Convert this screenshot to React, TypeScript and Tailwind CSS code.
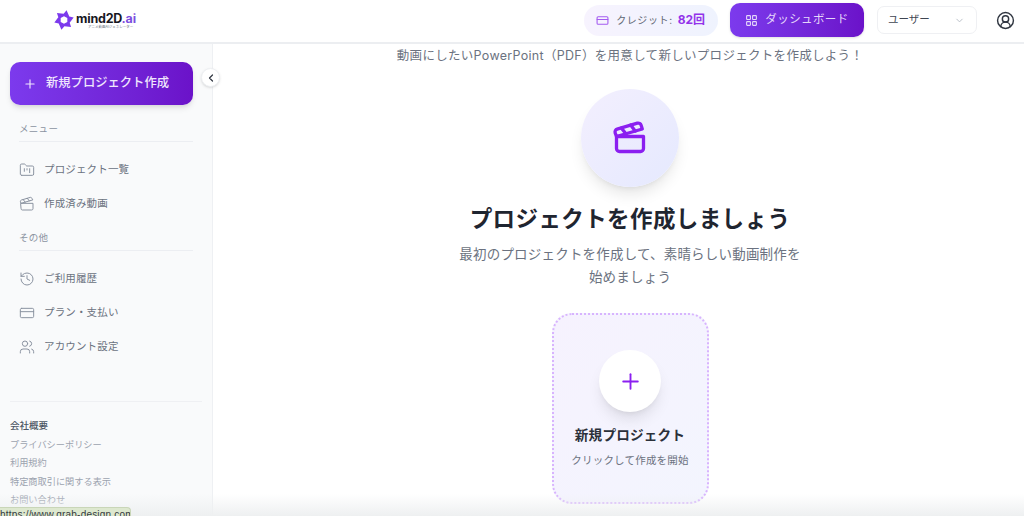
import { ChevronDown, ChevronLeft, CircleUserRound, Clapperboard, CreditCard, FolderKanban, History, LayoutGrid, Plus, Users } from "lucide-react";

// pinwheel outline of the logo mark
const logoPoints = [0, 1, 2, 3, 4, 5]
  .flatMap((i) => {
    const a = (i * Math.PI) / 3 - Math.PI / 2.4;
    const b = a + 0.72;
    return [
      `${(12 + 12 * Math.cos(a)).toFixed(2)} ${(12 + 12 * Math.sin(a)).toFixed(2)}`,
      `${(12 + 7.6 * Math.cos(b)).toFixed(2)} ${(12 + 7.6 * Math.sin(b)).toFixed(2)}`,
    ];
  })
  .join(" L ");

const logoHole = [0, 1, 2, 3, 4, 5]
  .map((i) => {
    const a = (i * Math.PI) / 3 - Math.PI / 6;
    return `${(12 + 4.6 * Math.cos(a)).toFixed(2)} ${(12 + 4.6 * Math.sin(a)).toFixed(2)}`;
  })
  .join(" L ");

function Logo() {
  return (
    <div className="flex items-center gap-[2px]">
      <svg width="20" height="20" viewBox="0 0 24 24" className="shrink-0">
        <path d={`M ${logoPoints} Z M ${logoHole} Z`} fill="#7c3aed" fillRule="evenodd" />
      </svg>
      <div className="flex flex-col items-start">
        <div className="text-[12.5px] font-bold leading-[13px] tracking-[-0.2px] text-[#17171f]">
          mind2D<span className="text-[#7c4fe0]">.ai</span>
        </div>
        <div className="ml-3 text-[3.5px] leading-[4px] text-gray-500">アニメ動画AIジェネレーター</div>
      </div>
    </div>
  );
}

function NavItem({ icon, label }: { icon: React.ReactNode; label: string }) {
  return (
    <div className="flex h-[34px] items-center gap-[9px] pl-[19px] text-[10.5px] tracking-[0.15px] text-[#6b7280]">
      <span className="flex w-[16px] justify-center text-[#8b93a1]">{icon}</span>
      {label}
    </div>
  );
}

function SectionTitle({ label }: { label: string }) {
  return (
    <div className="mx-[19px] border-b border-[#eceef2] pb-[5px] text-[9.5px] leading-[14px] tracking-[0.3px] text-[#8b93a1]">
      {label}
    </div>
  );
}

export default function App() {
  return (
    <div
      className="relative flex h-[516px] w-[1024px] flex-col overflow-hidden bg-white"
      style={{ fontFamily: 'Inter, "Noto Sans CJK JP", sans-serif' }}
    >
      {/* Header */}
      <header className="flex h-[44px] shrink-0 items-center border-b-2 border-[#eceef1] bg-white pb-[2px] pl-[54px] pr-[9px]">
        <Logo />
        <div className="ml-auto flex items-center">
          <div className="flex h-[31px] items-center gap-[7px] rounded-full bg-gradient-to-r from-[#f7f3fe] to-[#eff3fe] pl-[12px] pr-[13px]">
            <CreditCard size={13} strokeWidth={2} className="text-[#a45cf0]" />
            <span className="text-[10px] tracking-[0.6px] text-[#5f6672]">クレジット:</span>
            <span className="-ml-[2px] text-[12px] font-bold text-[#9333ea]">82回</span>
          </div>
          <button className="ml-[12px] flex h-[34px] w-[134px] items-center justify-center gap-[7px] rounded-[10px] bg-gradient-to-r from-[#7c3aed] to-[#6b12c9] text-[11.5px] tracking-[0.4px] text-[#e4d6fa] shadow-sm">
            <LayoutGrid size={13} strokeWidth={2} />
            ダッシュボード
          </button>
          <div className="ml-[13px] flex h-[28px] w-[100px] items-center justify-between rounded-[7px] border border-[#eff0f3] pl-[10px] pr-[11px] text-[10.5px] text-[#3f4652]">
            ユーザー
            <ChevronDown size={11} className="text-[#b6bbc4]" />
          </div>
          <CircleUserRound size={19} strokeWidth={1.8} className="ml-[19px] text-[#2f3540]" />
        </div>
      </header>

      <div className="flex min-h-0 flex-1">
        {/* Sidebar */}
        <aside className="flex w-[213px] shrink-0 flex-col border-r border-[#eef0f3] bg-[#f9fafb]">
          <div className="px-[10px] pt-[18px]">
            <button className="flex h-[43px] w-[183px] items-center gap-[9px] rounded-[10px] bg-gradient-to-r from-[#7c3aed] to-[#6b12c9] pl-[13px] text-[12.3px] font-medium text-[#efe6fd] shadow-md">
              <Plus size={14} strokeWidth={2} />
              新規プロジェクト作成
            </button>
          </div>
          <div className="mt-[17px]">
            <SectionTitle label="メニュー" />
          </div>
          <div className="mt-[11px]">
            <NavItem icon={<FolderKanban size={16} strokeWidth={1.5} />} label="プロジェクト一覧" />
            <NavItem icon={<Clapperboard size={16} strokeWidth={1.5} />} label="作成済み動画" />
          </div>
          <div className="mt-[10px]">
            <SectionTitle label="その他" />
          </div>
          <div className="mt-[11px]">
            <NavItem icon={<History size={16} strokeWidth={1.5} />} label="ご利用履歴" />
            <NavItem icon={<CreditCard size={16} strokeWidth={1.5} />} label="プラン・支払い" />
            <NavItem icon={<Users size={16} strokeWidth={1.5} />} label="アカウント設定" />
          </div>
          <div className="mx-[10px] mt-[37px] border-t border-[#eff0f3] pt-[15px]">
            <div className="text-[9.5px] font-medium leading-[18.5px] text-[#4b5563]">会社概要</div>
            <div className="text-[9.2px] leading-[18.5px] text-[#9ca3af]">プライバシーポリシー</div>
            <div className="text-[9.2px] leading-[18.5px] text-[#9ca3af]">利用規約</div>
            <div className="text-[9.2px] leading-[18.5px] text-[#9ca3af]">特定商取引に関する表示</div>
            <div className="text-[9.2px] leading-[18.5px] text-[#9ca3af]">お問い合わせ</div>
          </div>
        </aside>

        {/* Main */}
        <main className="flex min-w-0 flex-1 flex-col items-center pl-[23px]">
          <p className="mt-[2px] text-[12.5px] leading-[19px] tracking-[0.3px] text-[#6b7280]">
            動画にしたいPowerPoint（PDF）を用意して新しいプロジェクトを作成しよう！
          </p>
          <div className="mt-[24px] flex h-[98px] w-[98px] items-center justify-center rounded-full bg-gradient-to-br from-[#f3effe] to-[#e5e9fe] shadow-lg">
            <Clapperboard size={36} strokeWidth={2.2} className="text-[#8b1ff0]" />
          </div>
          <h1 className="mt-[15px] text-[22.5px] font-bold leading-[34px] tracking-[0.4px] text-[#1f2530]">
            プロジェクトを作成しましょう
          </h1>
          <p className="mt-[7px] w-[350px] text-center text-[13.5px] leading-[23px] tracking-[0.2px] text-[#6b7280]">
            最初のプロジェクトを作成して、素晴らしい動画制作を始めましょう
          </p>
          <div className="mt-[24px] flex h-[191px] w-[157px] shrink-0 flex-col items-center rounded-[20px] border-2 border-dotted border-[#d8b4fe] bg-gradient-to-br from-[#f6f2fe] to-[#f3f5fe]">
            <div className="mt-[35px] flex h-[62px] w-[62px] items-center justify-center rounded-full bg-white shadow-lg">
              <Plus size={25} strokeWidth={1.8} className="text-[#8b1ff0]" />
            </div>
            <div className="mt-[13px] text-[13.6px] font-bold leading-[20px] tracking-[0.2px] text-[#2b303a]">新規プロジェクト</div>
            <div className="mt-[8px] text-[10.5px] leading-[16px] tracking-[0.2px] text-[#6b7280]">クリックして作成を開始</div>
          </div>
        </main>
      </div>

      {/* Collapse toggle */}
      <button className="absolute left-[201px] top-[68px] flex h-[19px] w-[19px] items-center justify-center rounded-full border border-[#eef0f3] bg-white text-[#2f3540] shadow-sm">
        <ChevronLeft size={12} strokeWidth={2.4} />
      </button>

      {/* Bottom fade */}
      <div className="pointer-events-none absolute inset-x-0 bottom-0 h-[22px] bg-gradient-to-b from-transparent to-[#eef0f1]" />

      {/* Browser link status */}
      <div className="absolute bottom-0 left-0 h-[9px] w-[131px] overflow-hidden whitespace-nowrap rounded-tr-[4px] border-r border-t border-[#c9d6b8] bg-[#dde8cf] font-['Liberation_Sans'] text-[10px] leading-[14px] tracking-[0.2px] text-[#333a40]">
        https://www.grab-design.com
      </div>
    </div>
  );
}
